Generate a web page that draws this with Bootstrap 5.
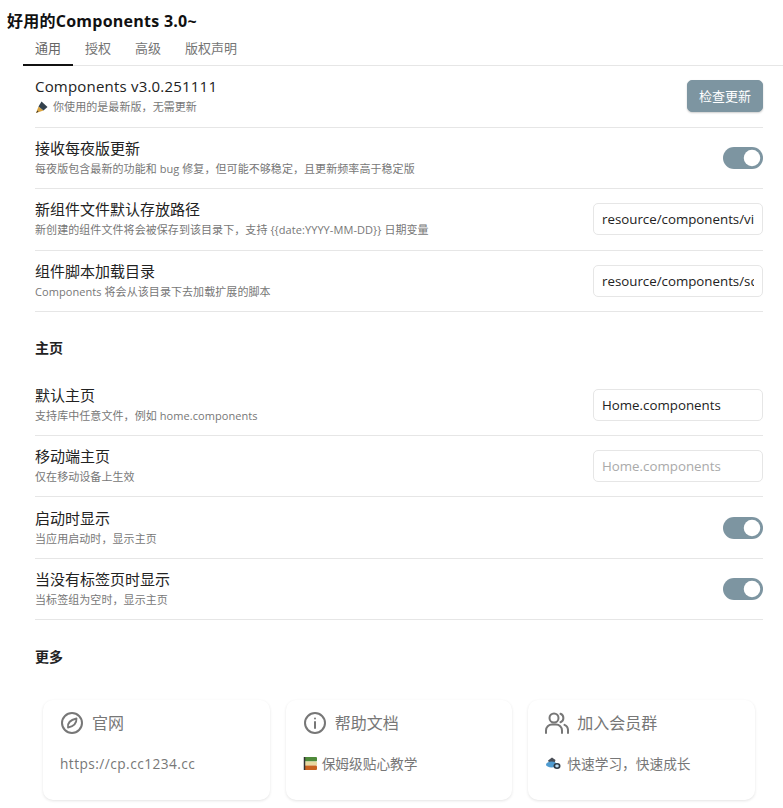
<!doctype html>
<html lang="zh"><head><meta charset="utf-8">
<link href="https://cdn.jsdelivr.net/npm/bootstrap@5.3.0/dist/css/bootstrap.min.css" rel="stylesheet">
<style>
html,body{background:#fff;overflow:hidden}
body{font-family:"Open Sans","Noto Sans CJK SC",sans-serif;color:#222;height:808px}
.ttl{font-size:16px;font-weight:700;color:#111;line-height:22px;padding:10px 0 0 7px;margin:0;letter-spacing:.25px}
.tabbar{margin:0 0 0 23px;padding:5px 0 0;border-bottom:1px solid #e6e6e6;height:34px;gap:0}
.tabbar a{display:block;width:50px;text-align:center;font-size:13px;line-height:22px;color:#757575;text-decoration:none;height:29px;margin-bottom:-1px}
.tabbar a.wide{width:auto;padding:0 12px}
.tabbar a.on{border-bottom:2px solid #111;color:#666}
.wrap{padding:0 20px 0 35px}
.srow{border-bottom:1px solid #e6e6e6;display:flex;align-items:center;justify-content:space-between}
.h61{height:61.5px}
.name{font-size:15px;line-height:20px;color:#222;margin-top:-2px}
.name.ver{letter-spacing:.2px}
.desc{font-size:11px;line-height:14px;color:#777;margin-top:4px;letter-spacing:.07px}
.btn-upd{background:#7d95a1;color:#fff;border:1px solid #7d95a1;font-size:13px;width:76px;height:32px;padding:0;border-radius:5px;box-shadow:0 1px 2px rgba(0,0,0,.2)}
.btn-upd:hover{background:#7d95a1;color:#fff;border-color:#7d95a1}
.fld{width:170px;height:32px;font-size:13.3px;padding:0 8px;border:1px solid #e6e6e6;border-radius:5px;color:#222;font-family:inherit}
.fld::placeholder{color:#aaa}
.form-switch{padding:0;margin:0;min-height:0;display:flex}
.form-switch .form-check-input{margin:0;width:40px;height:22px;background-color:#7d95a1;border:0;float:none}
.sec{font-size:14px;font-weight:700;color:#222;line-height:20px}
.s1{padding-top:26px;height:62.4px}
.s2{padding-top:27px;height:79.6px}
.gridc{padding:0 8px;gap:16px;display:grid;grid-template-columns:repeat(3,1fr);margin-right:0}
.ccard{height:100px;border-radius:10px;box-shadow:0 1px 3px rgba(0,0,0,.11);background:#fff;border:0;padding:11px 17px 0 17px}
.chead{display:flex;align-items:center;gap:8px;font-size:16px;color:#777;line-height:22px}
.cbody{font-size:13.7px;color:#777;margin-top:19px;line-height:20px;display:flex;align-items:center;gap:4px}
.cbody.link{letter-spacing:.45px}
</style></head>
<body>
<h1 class="ttl">好用的Components 3.0~</h1>
<nav class="tabbar d-flex">
<a class="on" href="#">通用</a><a href="#">授权</a><a href="#">高级</a><a class="wide" href="#">版权声明</a>
</nav>
<div class="wrap">
<div class="srow h61">
<div><div class="name ver">Components v3.0.251111</div><div class="desc d-flex align-items-center gap-1">
<svg width="14" height="14" viewBox="0 0 14 14"><path d="M1 13 3.500 6.500l5 4z" fill="#d9a441"/><path d="M3.500 6.500 6.500 1.500l6 5.500-4 3.500z" fill="#33414d"/><path d="M1 13l1.500-2.500 1 1.300z" fill="#333"/></svg>
<span>你使用的是最新版，无需更新</span></div></div>
<button class="btn btn-upd" type="button">检查更新</button>
</div>
<div class="srow h61">
<div><div class="name">接收每夜版更新</div><div class="desc">每夜版包含最新的功能和 bug 修复，但可能不够稳定，且更新频率高于稳定版</div></div>
<div class="form-check form-switch"><input class="form-check-input" type="checkbox" checked></div>
</div>
<div class="srow h61">
<div><div class="name">新组件文件默认存放路径</div><div class="desc">新创建的组件文件将会被保存到该目录下，支持 {{date:YYYY-MM-DD}} 日期变量</div></div>
<input class="form-control fld" value="resource/components/views">
</div>
<div class="srow h61">
<div><div class="name">组件脚本加载目录</div><div class="desc">Components 将会从该目录下去加载扩展的脚本</div></div>
<input class="form-control fld" value="resource/components/scripts">
</div>
<div class="sec s1">主页</div>
<div class="srow h61">
<div><div class="name">默认主页</div><div class="desc">支持库中任意文件，例如 home.components</div></div>
<input class="form-control fld" value="Home.components">
</div>
<div class="srow h61">
<div><div class="name">移动端主页</div><div class="desc">仅在移动设备上生效</div></div>
<input class="form-control fld" placeholder="Home.components">
</div>
<div class="srow h61">
<div><div class="name">启动时显示</div><div class="desc">当应用启动时，显示主页</div></div>
<div class="form-check form-switch"><input class="form-check-input" type="checkbox" checked></div>
</div>
<div class="srow h61">
<div><div class="name">当没有标签页时显示</div><div class="desc">当标签组为空时，显示主页</div></div>
<div class="form-check form-switch"><input class="form-check-input" type="checkbox" checked></div>
</div>
<div class="sec s2">更多</div>
<div class="gridc">
<div class="card ccard">
<div class="chead"><svg width="24" height="24" viewBox="0 0 24 24" fill="none" stroke="#777" stroke-width="2"><circle cx="12" cy="12" r="10"/><path d="M16.500 7.500c.2 3.500-1.500 7.500-8.500 9-.5-3.500 1.500-7.500 8.500-9z" stroke-width="1.800" stroke-linejoin="round"/></svg><span>官网</span></div>
<div class="cbody link">https://cp.cc1234.cc</div>
</div>
<div class="card ccard">
<div class="chead"><svg width="24" height="24" viewBox="0 0 24 24" fill="none" stroke="#777" stroke-width="2"><circle cx="12" cy="12" r="10"/><path d="M12 11v6" stroke-linecap="round"/><circle cx="12" cy="7.500" r="1" fill="#777" stroke="none"/></svg><span>帮助文档</span></div>
<div class="cbody"><svg width="15" height="15" viewBox="0 0 15 15"><rect x="1" y="1" width="13" height="4.500" rx="1" fill="#4e8a3a"/><rect x="1" y="5.500" width="13" height="4" rx="1" fill="#e8d9a0"/><rect x="1" y="9.500" width="13" height="4.500" rx="1" fill="#c9621f"/><path d="M1.500 1v13" stroke="#333" stroke-width="1.500"/></svg><span>保姆级贴心教学</span></div>
</div>
<div class="card ccard">
<div class="chead"><svg width="24" height="24" viewBox="0 0 24 24" fill="none" stroke="#777" stroke-width="2" stroke-linecap="round"><circle cx="9" cy="7" r="4.500"/><path d="M1 22v-2.500a6 6 0 0 1 6-6h4a6 6 0 0 1 6 6V22"/><path d="M15.500 2.800a4.500 4.500 0 0 1 0 8.400M19.500 13.800a6 6 0 0 1 3.500 5.700V22"/></svg><span>加入会员群</span></div>
<div class="cbody"><svg width="18" height="15" viewBox="0 0 18 15"><path d="M3 4.500 7 1.500l3.500 2.500-1 3-5 .5z" fill="#4a4f57"/><ellipse cx="6.500" cy="8.500" rx="5.500" ry="3" fill="#4f9bd0"/><ellipse cx="12" cy="10" rx="3.500" ry="3" fill="#2e3a45"/><ellipse cx="12" cy="10" rx="1.800" ry="1.400" fill="#bfe0f5"/></svg><span>快速学习，快速成长</span></div>
</div>
</div>
</div>
<script src="https://cdn.jsdelivr.net/npm/bootstrap@5.3.0/dist/js/bootstrap.bundle.min.js"></script>
</body></html>
